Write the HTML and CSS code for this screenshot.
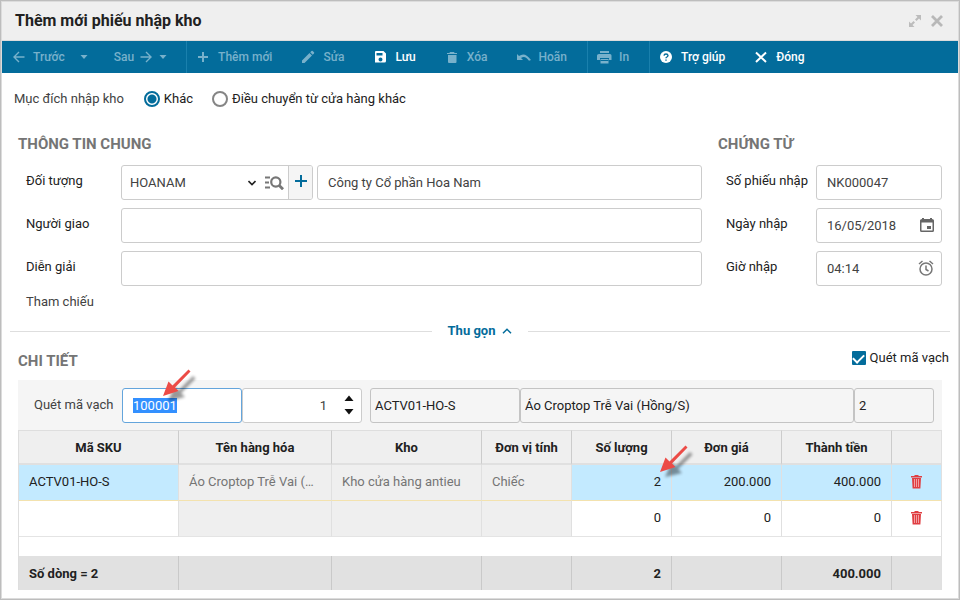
FILE: index.html
```html
<!DOCTYPE html>
<html lang="vi">
<head>
<meta charset="utf-8">
<meta name="viewport" content="width=device-width, initial-scale=1">
<title>Thêm mới phiếu nhập kho</title>
<link rel="stylesheet" href="styles.css">
</head>
<body>
<svg class="defs" aria-hidden="true">
  <defs>
    <filter id="soft" x="-30%" y="-30%" width="160%" height="160%"><feGaussianBlur stdDeviation="1.4"/></filter>
    <symbol id="pointer" viewBox="0 0 38 38">
      <path d="M6 33L12.500 18.500L16.500 22.500L31 8L33.500 10.500L19 25L23 29Z" fill="#000" opacity=".4" filter="url(#soft)"/>
      <path d="M1 28L6.500 13.500L10.500 17.500L26.500 1.500L28.500 3.500L13 19.500L16.500 23Z" fill="#ec4b46"/>
    </symbol>
    <symbol id="trash-red" viewBox="0 0 12 14">
      <path d="M3.500 0h4v1H11v1.500H0V1H3.500zM1 3h9l-.6 10.500H1.600z" fill="#e03e42"/>
      <path d="M3.500 4v8M5.500 4v8M7.500 4v8" stroke="#f6b9bb" stroke-width=".8"/>
    </symbol>
  </defs>
</svg>
<main class="window">
  <header class="titlebar">
    <h1>Thêm mới phiếu nhập kho</h1>
    <button class="plain" aria-label="Phóng to"><svg width="12" height="12" viewBox="0 0 12 12"><path d="M6.500 0H12v5.500L10 3.500 7.500 6 6 4.500 8.500 2zM5.500 12H0V6.500l2 2L4.500 6 6 7.500 3.500 10z" fill="#bcbcbc"/></svg></button>
    <button class="plain" aria-label="Đóng cửa sổ"><svg width="12" height="12" viewBox="0 0 12 12"><path d="M1 1l10 10M11 1L1 11" stroke="#b8b8b8" stroke-width="2.800"/></svg></button>
  </header>

  <nav class="toolbar" aria-label="Thanh công cụ">
    <div class="group nav">
      <button class="tool off"><svg class="ico" viewBox="0 0 16 16"><path d="M13.500 8H3.500M8 3L3 8l5 5" class="line"/></svg>Trước</button>
      <button class="caret off" aria-label="Chọn trước"><svg width="8" height="4" viewBox="0 0 8 4"><path d="M.5 0h7L4 4z" fill="currentColor"/></svg></button>
      <button class="tool next off">Sau<svg class="ico" viewBox="0 0 16 16"><path d="M2.500 8h10M8 3l5 5-5 5" class="line"/></svg></button>
      <button class="caret off" aria-label="Chọn sau"><svg width="8" height="4" viewBox="0 0 8 4"><path d="M.5 0h7L4 4z" fill="currentColor"/></svg></button>
    </div>
    <div class="group">
      <button class="tool off"><svg class="ico" viewBox="0 0 16 16"><path d="M8 3v10M3 8h10" class="line thick"/></svg>Thêm mới</button>
      <button class="tool off"><svg class="ico" viewBox="0 0 16 16"><path d="M2 14v-2.500L9.500 4 12 6.500 4.500 14zM10.200 3.300l1.300-1.300q.6-.5 1.200 0l1.300 1.300q.5.600 0 1.200l-1.300 1.300z" fill="currentColor"/></svg>Sửa</button>
      <button class="tool"><svg class="ico" viewBox="0 0 16 16"><path fill-rule="evenodd" d="M4 2h7.500L14 4.500V12q0 1.500-1.500 1.500h-9.500V3q0-1 1-1zM4.500 4v2.500h6V4zM8.500 8.500a2 2 0 1 0 0 4 2 2 0 0 0 0-4z" fill="currentColor"/></svg>Lưu</button>
      <button class="tool off"><svg class="ico" viewBox="0 0 16 16"><path d="M6 3h4l.6 1H13v1H3V4h2.400zM4 6h8.500v7q0 1-1 1H5q-1 0-1-1z" fill="currentColor"/></svg>Xóa</button>
      <button class="tool off"><svg class="ico" viewBox="0 0 16 16"><path d="M1 5l2 2q6-4.500 12 4l-2 .8Q9 6 5 9l2 2H1z" fill="currentColor"/></svg>Hoãn</button>
    </div>
    <div class="group">
      <button class="tool off"><svg class="ico" viewBox="0 0 16 16"><path d="M4 2h9v2H4zM3 5h11q1.500 0 1.500 1.500V11H13V9H4v2H1V6.500Q1 5 3 5z" fill="currentColor"/><path d="M4.500 10h8v4.500h-8z" fill="currentColor"/><path d="M4.500 11.500h8" stroke="#036c9b"/></svg>In</button>
    </div>
    <div class="group">
      <button class="tool"><svg class="ico" viewBox="0 0 16 16"><circle cx="8" cy="8" r="6" fill="currentColor"/><path d="M6 6.700Q6.200 5 8 5t2 1.500Q10 7.300 8.900 8 8 8.500 8 9.300M8 10.500v1.300" fill="none" stroke="#036c9b" stroke-width="1.400"/></svg>Trợ giúp</button>
      <button class="tool"><svg class="ico" viewBox="0 0 16 16"><path d="M3 3.500l10 9.500M13 3.500L3 13" class="line thick"/></svg>Đóng</button>
    </div>
  </nav>

  <form class="content">
    <div class="purpose" role="radiogroup" aria-labelledby="purpose-name">
      <span class="purpose-name" id="purpose-name">Mục đích nhập kho</span>
      <label class="radio"><input type="radio" name="purpose" checked>Khác</label>
      <label class="radio"><input type="radio" name="purpose">Điều chuyển từ cửa hàng khác</label>
    </div>

    <div class="sections">
      <section>
        <h2>THÔNG TIN CHUNG</h2>
        <div class="fields general">
          <label for="partner">Đối tượng</label>
          <div class="partner">
            <div class="combo">
              <select id="partner"><option>HOANAM</option></select>
              <svg class="chev" width="8" height="6" viewBox="0 0 8 6"><path d="M.5 1L4 4.500 7.500 1" fill="none" stroke="#222" stroke-width="1.600"/></svg>
              <button type="button" class="find" aria-label="Tìm"><svg width="19" height="14" viewBox="0 0 19 14"><path d="M0 1.500h5M0 6.500h4M0 11.500h5" stroke="#777" stroke-width="2"/><circle cx="10.800" cy="6" r="4.600" fill="none" stroke="#777" stroke-width="2.200"/><path d="M14 9.300l4 4" stroke="#777" stroke-width="2.800"/></svg></button>
              <button type="button" class="add" aria-label="Thêm đối tượng"><svg width="12" height="12" viewBox="0 0 12 12"><path d="M6 0v12M0 6h12" stroke="#036c9b" stroke-width="2"/></svg></button>
            </div>
            <input class="box" aria-label="Tên đối tượng" value="Công ty Cổ phần Hoa Nam">
          </div>
          <label for="deliverer">Người giao</label><input class="box" id="deliverer">
          <label for="note">Diễn giải</label><input class="box" id="note">
          <span class="reference">Tham chiếu</span>
        </div>
      </section>
      <section>
        <h2>CHỨNG TỪ</h2>
        <div class="fields voucher">
          <label for="number">Số phiếu nhập</label><input class="box" id="number" value="NK000047">
          <label for="date">Ngày nhập</label>
          <div class="with-icon"><input class="box" id="date" value="16/05/2018"><svg width="14" height="16" viewBox="0 0 14 16"><path fill-rule="evenodd" d="M2 1h2v1h6V1h2v1q2 0 2 1.500v10q0 1.500-1.500 1.500h-11Q0 15 0 13.500v-10Q0 2 2 2zM1.500 5.500v8h11v-8zM7 9h4v3H7z" fill="#666"/></svg></div>
          <label for="time">Giờ nhập</label>
          <div class="with-icon"><input class="box" id="time" value="04:14"><svg width="16" height="16" viewBox="0 0 16 16"><circle cx="8" cy="9" r="6" fill="none" stroke="#777" stroke-width="1.500"/><path d="M8 5.500V9.500l2.500 1.500M1 4l3.500-3M15 4l-3.500-3" fill="none" stroke="#777" stroke-width="1.500"/></svg></div>
        </div>
      </section>
    </div>

    <div class="divider">
      <button type="button" class="collapse">Thu gọn<svg width="10" height="6" viewBox="0 0 10 6"><path d="M1 5.300L5 1.300l4 4" fill="none" stroke="#036c9b" stroke-width="1.500"/></svg></button>
    </div>

    <section class="detail">
      <div class="detail-head">
        <h2>CHI TIẾT</h2>
        <label class="check"><input type="checkbox" checked>Quét mã vạch</label>
      </div>
      <div class="scan">
        <label for="barcode">Quét mã vạch</label>
        <div class="barcode">
          <input class="box" id="barcode" value="100001">
          <svg class="pointer"><use href="#pointer"/></svg>
        </div>
        <div class="spin">
          <input class="box" aria-label="Số lượng quét" value="1">
          <div class="steps">
            <button type="button" aria-label="Tăng"><svg width="10" height="6" viewBox="0 0 10 6"><path d="M.5 6L5 .5 9.500 6z" fill="#111"/></svg></button>
            <button type="button" aria-label="Giảm"><svg width="10" height="6" viewBox="0 0 10 6"><path d="M.5 0L5 5.500 9.500 0z" fill="#111"/></svg></button>
          </div>
        </div>
        <div class="result">
          <input class="box" aria-label="Mã SKU" value="ACTV01-HO-S" readonly>
          <input class="box" aria-label="Tên hàng hóa" value="Áo Croptop Trễ Vai (Hồng/S)" readonly>
          <input class="box" aria-label="Số lượng" value="2" readonly>
        </div>
      </div>
      <table>
        <colgroup><col class="c-sku"><col><col class="c-store"><col class="c-unit"><col class="c-qty"><col class="c-money"><col class="c-money"><col class="c-act"></colgroup>
        <thead>
          <tr><th>Mã SKU</th><th>Tên hàng hóa</th><th>Kho</th><th>Đơn vị tính</th><th>Số lượng</th><th>Đơn giá</th><th>Thành tiền</th><th></th></tr>
        </thead>
        <tbody>
          <tr class="selected"><td>ACTV01-HO-S</td><td class="locked">Áo Croptop Trễ Vai (…</td><td class="locked">Kho cửa hàng antieu</td><td class="locked">Chiếc</td><td class="num marked">2<svg class="pointer"><use href="#pointer"/></svg></td><td class="num">200.000</td><td class="num">400.000</td><td class="act"><button type="button" aria-label="Xóa dòng 1"><svg width="12" height="14"><use href="#trash-red"/></svg></button></td></tr>
          <tr><td></td><td class="locked"></td><td class="locked"></td><td class="locked"></td><td class="num">0</td><td class="num">0</td><td class="num">0</td><td class="act"><button type="button" aria-label="Xóa dòng 2"><svg width="12" height="14"><use href="#trash-red"/></svg></button></td></tr>
          <tr class="blank"><td colspan="8"></td></tr>
        </tbody>
        <tfoot>
          <tr><td>Số dòng = 2</td><td></td><td></td><td></td><td class="num">2</td><td></td><td class="num">400.000</td><td></td></tr>
        </tfoot>
      </table>
    </section>
  </form>
</main>
<script src="app.js"></script>
</body>
</html>
```
FILE: styles.css
```css
* { box-sizing: border-box; }

body {
  margin: 0;
  background: #fff;
  color: #212121;
  font: 13px/16px Roboto, "Liberation Sans", sans-serif;
}

button, input, select { font: inherit; color: inherit; }
button { border: 0; padding: 0; background: none; }
svg { display: block; flex: none; }
h1, h2 { margin: 0; font-weight: 700; }

.defs { position: absolute; width: 0; height: 0; }

.window {
  min-height: 100vh;
  border: 1px solid #bdbdbd;
  box-shadow: inset 0 0 0 1px #dcdcdc;
  padding: 1px;
}

.titlebar {
  display: flex;
  align-items: center;
  gap: 10px;
  height: 39px;
  padding: 0 15px 0 13px;
  background: #efefef;
  border-bottom: 1px solid #dcdcdc;
}
.titlebar h1 { flex: 1; font-size: 16px; line-height: 20px; }

.toolbar { display: flex; height: 32px; background: #036c9b; color: #fff; font-size: 12px; font-weight: 500; }
.group { display: flex; align-items: stretch; }
.group + .group { border-left: 1px solid #1a80ad; }
.tool { display: flex; align-items: center; gap: 7px; padding: 0 20px 0 8px; white-space: nowrap; }
.off { color: #78b1cb; }
.ico { width: 16px; height: 16px; }
.line { fill: none; stroke: currentColor; stroke-width: 1.4; }
.thick { stroke-width: 2; }
.nav { padding-right: 15px; }
.nav .tool { gap: 6px; padding: 0 11px 0 9px; }
.nav .next { gap: 4px; padding: 0 1px 0 22px; }
.caret { display: flex; align-items: center; justify-content: center; width: 16px; }

.content { padding: 0 8px; }

.purpose { display: flex; align-items: center; height: 52px; padding: 0 4px; }
.purpose-name { margin-right: 20px; color: #424242; }
.radio { display: flex; align-items: center; gap: 4px; margin-right: 19px; }
.radio input {
  appearance: none;
  width: 16px;
  height: 16px;
  margin: 0;
  border: 2px solid #858585;
  border-radius: 50%;
}
.radio input:checked { border-color: #036c9b; background: radial-gradient(#036c9b 4px, #fff 5px); }

h2 { font-size: 15px; line-height: 20px; color: #757575; }

.sections { display: grid; grid-template-columns: 1fr 224px; gap: 16px; margin: 0 8px; padding-top: 9px; }
.fields { display: grid; gap: 8px; padding: 11px 0 0 8px; }
.fields > label { align-self: start; line-height: 32px; }
.general { grid-template-columns: 87px 1fr; }
.voucher { grid-template-columns: 82px 1fr; }
.reference { color: #424242; }

.box {
  width: 100%;
  min-width: 0;
  height: 35px;
  border: 1px solid #ccc;
  border-radius: 3px;
  padding: 0 10px;
  background: #fff;
  color: #424242;
  outline: 0;
}

.partner { display: grid; grid-template-columns: 192px 1fr; gap: 4px; }
.combo { display: flex; align-items: center; height: 35px; border: 1px solid #ccc; border-radius: 3px; overflow: hidden; }
.combo select { flex: 1; min-width: 0; height: 100%; appearance: none; border: 0; padding: 0 8px; background: none; color: #424242; outline: 0; }
.find { padding: 0 4px 0 9px; }
.add { display: flex; justify-content: center; width: 24px; height: 100%; padding-top: 9px; border-left: 1px solid #ccc; background: #f5f5f5; }

.with-icon { position: relative; }
.with-icon svg { position: absolute; right: 8px; top: 9px; }

.divider { display: flex; align-items: center; gap: 16px; height: 32px; margin-top: 5px; }
.divider::before, .divider::after { content: ""; flex: 1; border-top: 1px solid #dedede; }
.collapse { display: flex; align-items: center; gap: 7px; font-weight: 700; color: #036c9b; }

.detail { margin: 0 8px; }
.detail-head { display: flex; align-items: center; justify-content: space-between; height: 27px; margin: 0 -7px 6px 0; }
.check { display: flex; align-items: center; align-self: flex-start; gap: 4px; line-height: 22px; }
.check input {
  appearance: none;
  width: 14px;
  height: 14px;
  margin: 0;
  border-radius: 1px;
  background: #036c9b;
  display: grid;
  place-items: center;
}
.check input::before {
  content: "";
  width: 9px;
  height: 5px;
  border: solid #fff;
  border-width: 0 0 2px 2px;
  transform: translateY(-1px) rotate(-45deg);
}

.scan { display: flex; align-items: center; height: 50px; padding: 0 8px 0 16px; background: #f5f5f5; }
.scan label { width: 88px; color: #424242; }
.barcode { position: relative; width: 120px; }
.barcode .box { border-color: #64a5dc; }
.barcode .box::selection { background: #3390ff; color: #fff; }
.barcode .pointer { left: 40px; top: -20px; }
.spin { position: relative; width: 120px; }
.spin .box { padding-right: 34px; text-align: right; }
.steps { position: absolute; right: 8px; top: 7px; display: grid; gap: 8px; }
.result { flex: 1; display: grid; grid-template-columns: 150px 1fr 80px; margin-left: 8px; }
.result .box { padding: 0 4px; border-color: #c4c4c4; background: #f5f5f5; color: #212121; }

.pointer { position: absolute; width: 38px; height: 38px; pointer-events: none; }

table { width: 100%; table-layout: fixed; border-collapse: separate; border-spacing: 0; border-left: 1px solid #dedede; }
.c-sku { width: 160px; }
.c-store { width: 150px; }
.c-unit { width: 90px; }
.c-qty { width: 100px; }
.c-money { width: 110px; }
.c-act { width: 50px; }

th, td { padding: 0 10px; border-right: 1px solid #e0e0e0; white-space: nowrap; text-align: left; }
th { height: 35px; padding-top: 2px; border-top: 1px solid #dedede; border-bottom: 2px solid #e0e0e0; border-right-color: #ccc; background: #efefef; font-weight: 700; text-align: center; }
tbody td { height: 36px; padding-bottom: 2px; border-bottom: 1px solid #e4e4e4; }
.selected td { border-bottom-color: #f3e2ae; background: #c3eaff; }
tbody td.locked { background: #efefef; color: #757575; }
.num { text-align: right; }
.marked { position: relative; }
.marked .pointer { right: -26px; top: -21px; }
.act button { display: block; margin: 0 auto; }
tbody .blank td { height: 19px; padding: 0; border-bottom: 0; }
tfoot td { height: 34px; padding-top: 2px; border-right-color: #c9c9c9; background: #e1e1e1; font-weight: 700; }
th:last-child, tfoot td:last-child { border-right-color: #e0e0e0; }
```
FILE: app.js
```js
// The barcode field is ready for the next scan: focused with its text selected.
const barcode = document.getElementById("barcode");
barcode.focus();
barcode.select();
```
